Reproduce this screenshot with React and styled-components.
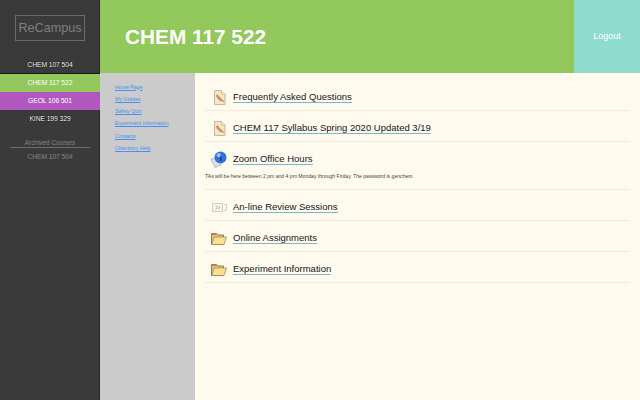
import React from "react";
import styled, { createGlobalStyle } from "styled-components";

const GlobalStyle = createGlobalStyle`
  html, body {
    margin: 0;
    padding: 0;
    height: 100%;
    overflow: hidden;
    font-family: "Liberation Sans", Arial, sans-serif;
  }
  #root {
    height: 100%;
  }
`;

const Page = styled.div`
  display: flex;
  width: 640px;
  height: 400px;
  overflow: hidden;
  background: #fefaee;
`;

const Sidebar = styled.aside`
  width: 100px;
  flex: none;
  display: flex;
  flex-direction: column;
  align-items: center;
  background: #3a3a3a;
  box-shadow: inset -1px 0 0 #262626;
`;

const Logo = styled.div`
  box-sizing: border-box;
  width: 70px;
  height: 26px;
  margin: 15px 0 15px;
  border: 1px solid #6b6b6b;
  color: #808080;
  font-size: 12.6px;
  line-height: 24px;
  text-align: center;
`;

const CourseList = styled.nav`
  width: 100%;
  display: flex;
  flex-direction: column;
`;

const Course = styled.div`
  box-sizing: border-box;
  height: 18px;
  line-height: 17px;
  text-align: center;
  font-size: 6.8px;
  letter-spacing: -0.1px;
  color: #ffffff;
  background: ${({ $bg }) => $bg || "transparent"};
  text-shadow: ${({ $bg }) => ($bg ? "none" : "0 0 1px #000, 0 0 1px #000")};
  border-bottom: ${({ $line }) => ($line ? "1px solid #161616" : "none")};
`;

const ArchiveTitle = styled.div`
  box-sizing: content-box;
  width: 80px;
  margin-top: 10px;
  border-bottom: 1px solid #6d6d6d;
  color: #858585;
  font-size: 6.4px;
  line-height: 9px;
  text-align: center;
`;

const ArchivedCourse = styled.div`
  margin-top: 4px;
  color: #858585;
  font-size: 6.8px;
  letter-spacing: -0.1px;
  line-height: 10px;
`;

const Main = styled.div`
  flex: 1;
  min-width: 0;
  display: flex;
  flex-direction: column;
`;

const Header = styled.header`
  height: 73px;
  flex: none;
  display: flex;
  background: #92c85c;
`;

const Title = styled.h1`
  flex: 1;
  margin: 0;
  padding-left: 25px;
  color: #ffffff;
  font-size: 20.8px;
  font-weight: 700;
  line-height: 73px;
`;

const Logout = styled.div`
  width: 66px;
  flex: none;
  background: #8fdccf;
  color: #ffffff;
  font-size: 9px;
  line-height: 73px;
  text-align: center;
`;

const Body = styled.div`
  flex: 1;
  display: flex;
  min-height: 0;
`;

const SideNav = styled.nav`
  width: 95px;
  flex: none;
  box-sizing: border-box;
  padding: 10.5px 0 0 15px;
  display: flex;
  flex-direction: column;
  align-items: flex-start;
  gap: 5.3px;
  background: #cbcbcb;
`;

const NavLink = styled.a`
  color: #4a90ee;
  font-size: 5.2px;
  line-height: 7px;
  text-decoration: underline;
`;

const Content = styled.main`
  flex: 1;
  min-width: 0;
  box-sizing: border-box;
  padding: 7px 10px 0;
  background: #fefaee;
`;

const Item = styled.section`
  padding-bottom: ${({ $note }) => ($note ? "9px" : "0")};
  border-bottom: 1px solid #eeeadd;
`;

const ItemRow = styled.div`
  box-sizing: border-box;
  height: 30px;
  padding-top: 4px;
  display: flex;
  align-items: center;
`;

const IconSlot = styled.div`
  width: 28px;
  flex: none;
  display: flex;
  justify-content: center;
  svg {
    display: block;
  }
`;

const ItemLink = styled.a`
  color: #161616;
  font-size: 9.5px;
  line-height: 11px;
  border-bottom: 1px solid #7fb4cf;
`;

const Note = styled.p`
  margin: 1px 0 0;
  color: #444444;
  font-size: 5.1px;
  line-height: 7px;
`;

const DocIcon = () => (
  <svg width="13" height="15" viewBox="0 0 13 15">
    <path d="M1.5 .5h7l3.5 3.5v10.500H1.500z" fill="#fbe9b2" stroke="#bdb8aa" />
    <path d="M8.5 .5V4H12" fill="#fbf8ee" stroke="#bdb8aa" />
    <path d="M3.5 5l5 5.500" stroke="#d67a96" strokeWidth="2.2" />
    <path d="M3 6.500l4.500 5" stroke="#9a8f7c" strokeWidth=".5" />
    <path d="M8.500 10.500l2 2-.4-2.800z" fill="#77705f" />
  </svg>
);

const GlobeIcon = () => (
  <svg width="18" height="17" viewBox="0 0 18 17">
    <path d="M1 8l7-1 3 7-6 2.500z" fill="#dde0ea" stroke="#a4a9bb" strokeWidth=".7" />
    <circle cx="10.500" cy="6.500" r="6" fill="#2f72d6" />
    <circle cx="8.800" cy="4.200" r="2" fill="#9cc8f6" />
    <path d="M10 5.500h1.500v4.500H10z" fill="#123f96" />
  </svg>
);

const ReviewIcon = () => (
  <svg width="15" height="9" viewBox="0 0 15 9">
    <rect x=".5" y=".5" width="10" height="8" fill="#f8f5ea" stroke="#cfcdc4" />
    <path d="M3.500 2.500l2 2-2 2M6 2.500l2 2-2 2" fill="none" stroke="#b4b2a9" />
    <path d="M12 1.500h2.500v6H12" fill="none" stroke="#cfcdc4" />
  </svg>
);

const FolderIcon = () => (
  <svg width="16" height="13" viewBox="0 0 16 13">
    <path d="M.5 12.500V1.500h5l1 1.500h6v9.500z" fill="#e8c078" stroke="#8f7a55" />
    <path d="M.8 12.500L3 5h12.500l-2.500 7.500z" fill="#fde08e" stroke="#a08a58" strokeWidth=".8" />
    <path d="M1 1.500h4.500v1.500H1z" fill="#e2764e" />
  </svg>
);

const courses = [
  { name: "CHEM 107 504", line: true },
  { name: "CHEM 117 522", bg: "#92c85c" },
  { name: "GEOL 106 501", bg: "#b158c0" },
  { name: "KINE 199 329" },
];

const navLinks = [
  "Home Page",
  "My Grades",
  "Safety Quiz",
  "Experiment Information",
  "Contacts",
  "Chemistry Help",
];

const items = [
  { label: "Frequently Asked Questions", icon: <DocIcon /> },
  { label: "CHEM 117 Syllabus Spring 2020 Updated 3/19", icon: <DocIcon /> },
  {
    label: "Zoom Office Hours",
    icon: <GlobeIcon />,
    note: "TAs will be here between 2 pm and 4 pm Monday through Friday. The password is genchem",
  },
  { label: "An-line Review Sessions", icon: <ReviewIcon /> },
  { label: "Online Assignments", icon: <FolderIcon /> },
  { label: "Experiment Information", icon: <FolderIcon /> },
];

const App = () => {
  return (
    <Page>
      <GlobalStyle />
      <Sidebar>
        <Logo>ReCampus</Logo>
        <CourseList>
          {courses.map((course) => (
            <Course key={course.name} $bg={course.bg} $line={course.line}>
              {course.name}
            </Course>
          ))}
        </CourseList>
        <ArchiveTitle>Archived Courses</ArchiveTitle>
        <ArchivedCourse>CHEM 107 504</ArchivedCourse>
      </Sidebar>
      <Main>
        <Header>
          <Title>CHEM 117 522</Title>
          <Logout>Logout</Logout>
        </Header>
        <Body>
          <SideNav>
            {navLinks.map((link) => (
              <NavLink key={link}>{link}</NavLink>
            ))}
          </SideNav>
          <Content>
            {items.map((item) => (
              <Item key={item.label} $note={item.note}>
                <ItemRow>
                  <IconSlot>{item.icon}</IconSlot>
                  <ItemLink>{item.label}</ItemLink>
                </ItemRow>
                {item.note && <Note>{item.note}</Note>}
              </Item>
            ))}
          </Content>
        </Body>
      </Main>
    </Page>
  );
};

export default App;
